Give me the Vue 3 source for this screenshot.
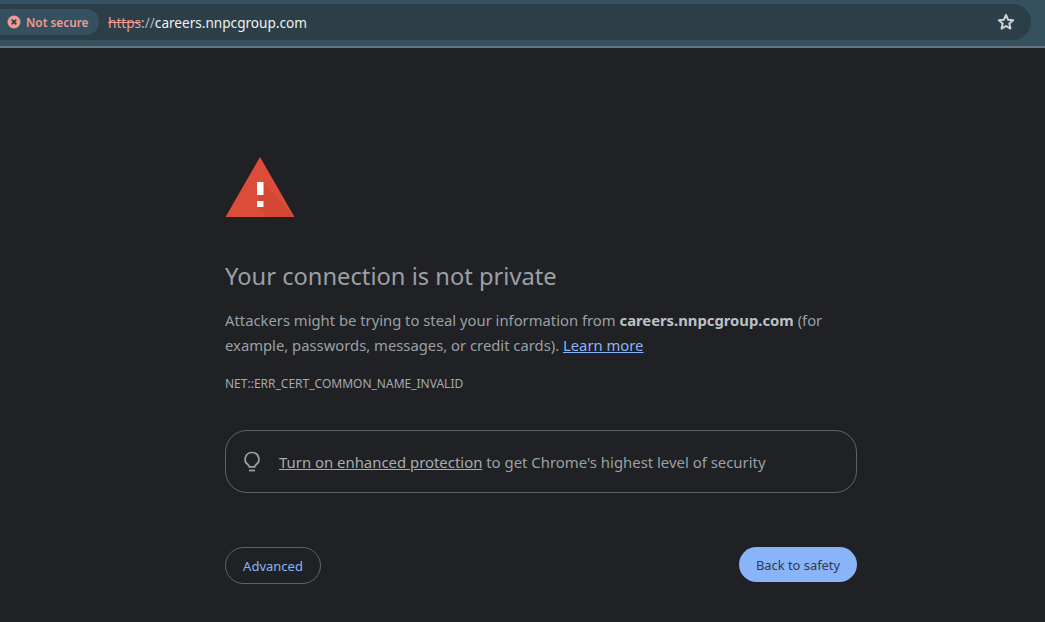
<template>
  <div class="page">
    <header class="toolbar">
      <div class="omnibox">
        <div class="chip">
          <svg class="chip-icon" width="14" height="14" viewBox="0 0 14 14" aria-hidden="true">
            <circle cx="7" cy="7" r="6.5" fill="#ee9a93" />
            <path d="M4.7 4.7l4.6 4.6M9.3 4.7l-4.6 4.6" stroke="#2c3f48" stroke-width="1.7" />
          </svg>
          <span>Not secure</span>
        </div>
        <div class="url"><span class="scheme">https</span><span class="slashes">://</span>careers.nnpcgroup.com</div>
        <svg class="star" width="20" height="20" viewBox="0 0 24 24" aria-hidden="true">
          <path d="M12 3.6l2.5 5.6 6.1.6-4.6 4.1 1.3 6-5.3-3.1-5.3 3.1 1.3-6-4.6-4.1 6.1-.6z" fill="none" stroke="#cdd3d6" stroke-width="2.400" stroke-linejoin="round" />
        </svg>
      </div>
    </header>

    <main class="interstitial">
      <svg class="warning" width="70" height="62" viewBox="0 0 70 62" aria-hidden="true">
        <path d="M35 0L69.500 60H.5z" fill="#dd4b39" />
        <path d="M38.500 26L69.500 60H42L32 50z" fill="#c9422f" opacity=".4" />
        <rect x="32" y="25" width="6.500" height="13" fill="#fff" />
        <rect x="32" y="44" width="6.500" height="6" fill="#fff" />
      </svg>

      <h1>Your connection is not private</h1>
      <p class="message">
        Attackers might be trying to steal your information from <b>careers.nnpcgroup.com</b> (for example, passwords, messages, or credit cards). <a class="learn" href="#">Learn more</a>
      </p>
      <div class="code">NET::ERR_CERT_COMMON_NAME_INVALID</div>

      <div class="promo">
        <svg width="20" height="24" viewBox="0 0 20 24" aria-hidden="true">
          <path d="M10 2.500a6.800 6.800 0 0 0-3.600 12.600c.6.4.9 1 .9 1.700h5.400c0-.7.3-1.300.9-1.700A6.800 6.800 0 0 0 10 2.500z" fill="none" stroke="#9aa0a6" stroke-width="1.700" />
          <path d="M7 20.500h6" stroke="#9aa0a6" stroke-width="1.800" />
        </svg>
        <span><a href="#">Turn on enhanced protection</a> to get Chrome's highest level of security</span>
      </div>

      <div class="actions">
        <button class="btn-advanced">Advanced</button>
        <button class="btn-back">Back to safety</button>
      </div>
    </main>
  </div>
</template>

<script setup>
</script>

<style>
html, body { background: #202124; }
</style>

<style scoped>
.page {
  width: 1045px;
  height: 622px;
  overflow: hidden;
  background: #202124;
  font-family: "Noto Sans", "Open Sans", sans-serif;
  color: #9aa0a6;
}
.toolbar {
  height: 48px;
  box-sizing: border-box;
  padding: 4px 14px 6px 0;
  background: #35505e;
  border-bottom: 2px solid #66757d;
}
.omnibox {
  height: 36px;
  display: flex;
  align-items: center;
  background: #2c3f48;
  border-radius: 0 18px 18px 0;
}
.chip {
  height: 26px;
  width: 99px;
  box-sizing: border-box;
  display: flex;
  align-items: center;
  gap: 5px;
  padding-left: 7px;
  background: #35505e;
  border-radius: 0 13px 13px 0;
  color: #ee9a93;
  font-size: 11.800px;
  font-weight: 600;
}
.url {
  margin-left: 9px;
  font-size: 13.600px;
  color: #eef1f2;
}
.scheme {
  color: #ee9a93;
  text-decoration: line-through;
}
.slashes { color: #aeb6ba; }
.star { margin-left: auto; margin-right: 15px; }

.interstitial {
  width: 632px;
  margin-left: 225px;
  padding-top: 109px;
}
.warning { display: block; }
h1 {
  margin: 41px 0 0;
  font-size: 23.700px;
  line-height: 32px;
  font-weight: 400;
  color: #9aa0a6;
}
.message {
  margin: 16px 0 0;
  font-size: 14.800px;
  line-height: 25px;
}
.message b { color: #bdc1c6; font-weight: 700; }
.learn { color: #8ab4f8; }
.code {
  margin-top: 18px;
  font-size: 12px;
  line-height: 16px;
  color: #a4a9ae;
}
.promo {
  margin-top: 38px;
  height: 63px;
  box-sizing: border-box;
  display: flex;
  align-items: center;
  gap: 17px;
  padding-left: 16px;
  border: 1px solid #5f6368;
  border-radius: 22px;
  font-size: 14.900px;
}
.promo a { color: #a7acb1; }
.actions {
  margin-top: 54px;
  display: flex;
  justify-content: space-between;
}
button {
  height: 37px;
  border-radius: 19px;
  font-family: inherit;
}
.btn-advanced {
  width: 96px;
  background: transparent;
  border: 1px solid #5f6368;
  color: #8ab4f8;
  font-size: 13px;
}
.btn-back {
  width: 118px;
  height: 35px;
  background: #8ab4f8;
  border: none;
  color: #2d3a52;
  font-size: 12.900px;
}
</style>
